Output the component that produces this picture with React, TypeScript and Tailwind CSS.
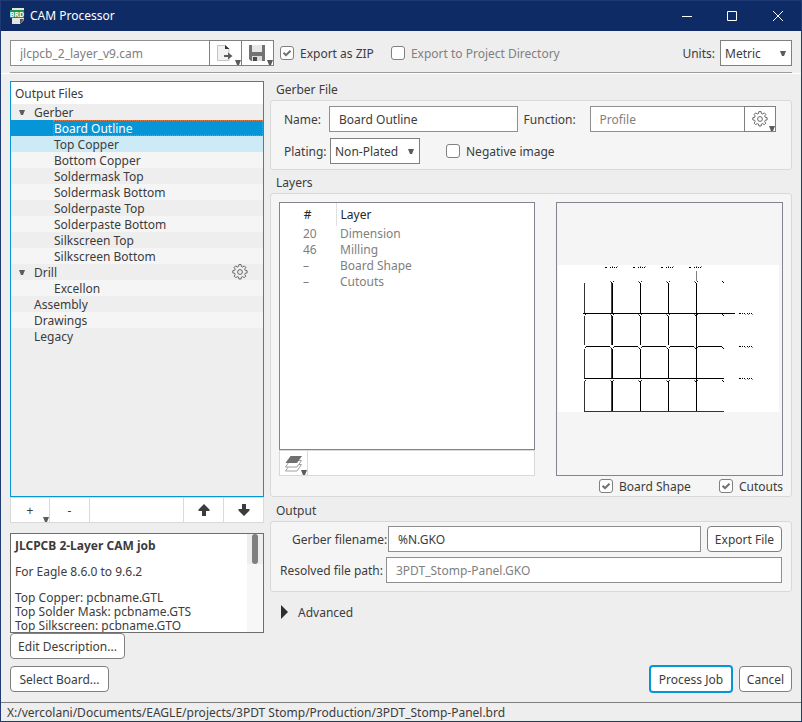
import { type ReactNode } from "react";

type Row = { label: string; level: 0 | 1; open?: boolean; gear?: boolean; state?: "selected" | "hover" };

const rows: Row[] = [
  { label: "Gerber", level: 0, open: true },
  { label: "Board Outline", level: 1, state: "selected" },
  { label: "Top Copper", level: 1, state: "hover" },
  { label: "Bottom Copper", level: 1 },
  { label: "Soldermask Top", level: 1 },
  { label: "Soldermask Bottom", level: 1 },
  { label: "Solderpaste Top", level: 1 },
  { label: "Solderpaste Bottom", level: 1 },
  { label: "Silkscreen Top", level: 1 },
  { label: "Silkscreen Bottom", level: 1 },
  { label: "Drill", level: 0, open: true, gear: true },
  { label: "Excellon", level: 1 },
  { label: "Assembly", level: 0 },
  { label: "Drawings", level: 0 },
  { label: "Legacy", level: 0 },
];

const layers = [
  ["20", "Dimension"],
  ["46", "Milling"],
  ["–", "Board Shape"],
  ["–", "Cutouts"],
];

const field = "h-[26px] min-w-0 border border-[#8f8f8f] bg-white pt-px px-[9px] outline-none";
const pushButton = "h-[26px] shrink-0 rounded-[4px] border border-[#808080] bg-white pt-[2px] text-center whitespace-nowrap";

function Triangle({ className = "" }: { className?: string }) {
  return (
    <svg className={className} width="6" height="5" viewBox="0 0 6 5" aria-hidden="true">
      <path d="M0 0h6L4 5H2z" fill="#5c5c5c" />
    </svg>
  );
}

function Gear({ className = "" }: { className?: string }) {
  return (
    <svg className={className} width="16" height="16" viewBox="0 0 16 16" fill="none" stroke="#666" aria-hidden="true">
      <path d="M6.900.6h2.200l.3 1.900 1.300.5 1.600-1.100 1.500 1.500-1.100 1.600.5 1.300 1.900.4v2.200l-1.900.4-.5 1.300 1.100 1.600-1.500 1.500-1.600-1.100-1.300.5-.3 1.900H6.900l-.4-1.900-1.300-.5-1.600 1.100-1.500-1.500 1.100-1.600-.5-1.300-1.900-.4V6.700l1.900-.4.5-1.300-1.100-1.600 1.500-1.500L5.200 3l1.300-.5z" />
      <circle cx="8" cy="8" r="2.400" />
    </svg>
  );
}

function Check({ children, checked, muted, className = "" }: { children: ReactNode; checked?: boolean; muted?: boolean; className?: string }) {
  return (
    <label className={`flex items-center gap-[6px] whitespace-nowrap ${muted ? "text-[#808080]" : ""} ${className}`}>
      <span className="relative flex size-[14px]">
        <input type="checkbox" defaultChecked={checked} className="peer size-[14px] appearance-none rounded-[3px] border border-[#808080] bg-white" />
        <svg className="pointer-events-none absolute inset-0 hidden peer-checked:block" viewBox="0 0 14 14" aria-hidden="true">
          <path d="M3.500 6.800 6 9.200l4.500-4.500" fill="none" stroke="#707070" strokeWidth="2" />
        </svg>
      </span>
      <span className="pt-[2px]">{children}</span>
    </label>
  );
}

function Select({ id, value, className }: { id: string; value: string; className: string }) {
  return (
    <div className={`relative flex ${className}`}>
      <select id={id} defaultValue={value} className="h-[26px] w-full appearance-none border border-[#808080] bg-white pt-[2px] pl-1 outline-none">
        <option>{value}</option>
      </select>
      <Triangle className="pointer-events-none absolute top-[11px] right-[6px]" />
    </div>
  );
}

function Group({ title, children, className = "", body }: { title: string; children: ReactNode; className?: string; body: string }) {
  return (
    <section className={`flex flex-col ${className}`}>
      <h2 className="mb-px pl-[6px] leading-[18px]">{title}</h2>
      <div className={`rounded-[3px] border border-[#d9d9d9] bg-[#f5f5f5] ${body}`}>{children}</div>
    </section>
  );
}

const columns = [83, 111, 139];
const bands = [
  [80, 110],
  [113, 142],
  [146, 175],
  [178, 208],
];

function BoardPreview() {
  return (
    <svg className="h-full w-full" viewBox="0 0 225 272" shapeRendering="crispEdges" role="img" aria-label="Board preview">
      <rect x="1" y="62" width="221" height="147" fill="#fff" />
      {bands.map(([top, bottom]) => (
        <g key={top}>
          <rect x="27" y={top} width="1" height={bottom - top} fill="#333" />
          <rect x="54" y={top} width="1" height={bottom - top} fill="#444" />
          <rect x="55" y={top} width="1" height={bottom - top} fill="#000" />
          {columns.map((x) => (
            <rect key={x} x={x} y={top} width="1" height={bottom - top} fill="#000" />
          ))}
        </g>
      ))}
      <rect x="139" y="80" width="1" height="128" fill="#000" />
      <rect x="139" y="68" width="1" height="10" fill="#808080" />
      <rect x="26" y="110" width="152" height="1" />
      <rect x="27" y="175" width="140" height="1" />
      <rect x="27" y="208" width="140" height="1" fill="#333" />
      {[29, 57, 85, 113, 141].map((x) => (
        <rect key={x} x={x} y="143" width="24" height="1" />
      ))}
      {[78, 111, 144, 177].map((y) =>
        [55, 83, 111, 139, 167].map((x) => (
          <g key={`${x}-${y}`}>
            <rect x={x - 2} y={y} width="1" height="1" fill={x === 167 ? "#000" : "#777"} />
            <rect x={x - 1} y={y + 1} width="1" height="1" />
            {x !== 167 && <rect x={x + 1} y={y} width="1" height="1" fill="#222" />}
          </g>
        )),
      )}
      <rect x="28" y="111" width="1" height="1" />
      <rect x="28" y="144" width="1" height="1" />
      <rect x="28" y="177" width="1" height="1" />
      {[48, 76, 104, 132].map((x) => (
        <g key={x}>
          <path d={`M${x} 64.5h2m3 0h1m1 0h1m1 0h1m1 0h1`} stroke="#000" />
          <path d={`M${x + 7} 63.5h1m4 0h1`} stroke="#888" />
        </g>
      ))}
      {[110, 143, 175].map((y) => (
        <g key={y}>
          <path d={`M182 ${y + 0.5}h2m1 0h1m1 0h1m2 0h1m1 0h1m1 0h1`} stroke="#000" />
          <path d={`M188 ${y + 1.5}h1m2 0h1m3 0h1`} stroke="#888" />
        </g>
      ))}
    </svg>
  );
}

export default function App() {
  return (
    <div className="flex min-h-screen flex-col border-x border-b border-[#1f3a75] bg-[#eee] font-['Noto_Sans','Open_Sans',sans-serif] text-[12px] leading-[16px] text-[#3c3c3c]">
      <header className="flex h-[31px] items-center border-t border-[#1f3a75] bg-[#0f2b66] pl-[9px] text-white">
        <svg width="16" height="18" viewBox="0 0 16 18" aria-hidden="true">
          <path d="M2 1h12v12l-4 4H2z" fill="#e4e4e4" />
          <path d="M14 12h-4v5z" fill="#555" />
          <rect x="0" y="3" width="14" height="8" fill="#1d9647" />
          <text x="7" y="9.500" textAnchor="middle" fontSize="7" fontWeight="700" fill="#fff">BRD</text>
        </svg>
        <h1 className="ml-[4px] flex-1">CAM Processor</h1>
        <button aria-label="Minimize" className="flex h-full w-[45px] items-center justify-center">
          <svg width="10" height="10" viewBox="0 0 10 10" stroke="currentColor"><path d="M0 5.500h10" /></svg>
        </button>
        <button aria-label="Maximize" className="flex h-full w-[45px] items-center justify-center">
          <svg width="10" height="10" viewBox="0 0 10 10" fill="none" stroke="currentColor"><path d="M.5.5h9v9h-9z" /></svg>
        </button>
        <button aria-label="Close" className="flex h-full w-[47px] items-center justify-center">
          <svg width="10" height="10" viewBox="0 0 10 10" fill="none" stroke="currentColor"><path d="m0 0 10 10M10 0 0 10" /></svg>
        </button>
      </header>

      <div className="mx-[9px] flex h-[42px] items-center border-b border-[#9a9a9a] pt-[2px]">
        <input aria-label="CAM job file" defaultValue="jlcpcb_2_layer_v9.cam" className={`${field} w-[200px] text-[#808080]`} />
        <button aria-label="Load job file" className="relative -ml-px h-[26px] w-[33px] border border-[#808080] bg-white">
          <svg className="ml-[6px]" width="18" height="18" viewBox="0 0 18 18" aria-hidden="true">
            <path d="M1.500 1.500h8l3.500 3.500v11.500h-11.500z" fill="#f2f2f2" stroke="#c4c4c4" />
            <path d="M9 1v4h4.500z" fill="#333" />
            <path d="M8 11h4V8.500l4.500 3.500-4.500 3.500V13H8z" fill="#5c5c5c" />
          </svg>
          <Triangle className="absolute right-0 bottom-0" />
        </button>
        <button aria-label="Save job file" className="relative -ml-px h-[26px] w-[33px] border border-[#808080] bg-white">
          <svg className="ml-[6px]" width="18" height="18" viewBox="0 0 18 18" aria-hidden="true">
            <path d="M1 1h16v16H3l-2-2z" fill="#737373" />
            <path d="M4 1h10v7H4z" fill="#e8e8e8" />
            <path d="M4 12h10v5H4z" fill="#dcdcdc" />
            <path d="M5 13h4v4H5z" fill="#4a4a4a" />
          </svg>
          <Triangle className="absolute right-0 bottom-0" />
        </button>
        <Check checked className="ml-[6px]">Export as ZIP</Check>
        <Check muted className="ml-[17px]">Export to Project Directory</Check>
        <label htmlFor="units" className="ml-auto pt-[2px]">Units:</label>
        <Select id="units" value="Metric" className="ml-[5px] w-[72px]" />
      </div>

      <main className="grid flex-1 grid-cols-[254px_minmax(0,1fr)] gap-x-[6px] border-t border-white px-[9px] pt-[7px]">
        <div className="flex flex-col">
          <div className="flex-1 border border-[#0696d7]">
            <h2 className="h-[22px] bg-white pl-1 leading-[24px]">Output Files</h2>
            <ul>
              {rows.map((row) => (
                <li key={row.label} className="odd:bg-[#eee] even:bg-[#f5f5f5]">
                  <button
                    className={`flex h-[16px] w-full items-center text-left ${
                      row.state === "selected" ? "bg-[#0696d7] text-white" : row.state === "hover" ? "bg-[#cdeaf7]" : ""
                    }`}
                  >
                    {row.level === 0 && <span className="flex w-[23px] pl-[8px]">{row.open && <Triangle />}</span>}
                    <span
                      className={`h-[16px] flex-1 leading-[17px] ${row.level === 1 ? "ml-[42px] pl-px" : ""} ${
                        row.state === "selected" ? "outline-1 -outline-offset-1 outline-[#e07b45] outline-dotted" : ""
                      }`}
                    >
                      {row.label}
                    </span>
                    {row.gear && <Gear className="mr-[15px]" />}
                  </button>
                </li>
              ))}
            </ul>
          </div>
          <div className="flex h-[26px] border border-[#d9d9d9] bg-white">
            <button aria-label="Add" className="relative w-[39px] border-r border-[#d9d9d9] pt-[2px]">
              +
              <Triangle className="absolute right-0 bottom-0" />
            </button>
            <button aria-label="Remove" className="w-[40px] border-r border-[#d9d9d9] pt-[2px]">-</button>
            <span className="flex-1" />
            <button aria-label="Move up" className="flex w-[41px] items-center justify-center border-x border-[#d9d9d9]">
              <svg width="12" height="12" viewBox="0 0 12 12" fill="#3c3c3c"><path d="M6 0l5.500 5.500v1.500H8v5H4V7H.5V5.500z" /></svg>
            </button>
            <button aria-label="Move down" className="flex w-[39px] items-center justify-center">
              <svg width="12" height="12" viewBox="0 0 12 12" fill="#3c3c3c"><path d="M6 12l5.500-5.500V5H8V0H4v5H.5v1.500z" /></svg>
            </button>
          </div>
          <div className="mt-[10px] flex h-[100px] overflow-hidden border border-[#6e6e6e] bg-white leading-[14px]">
            <div className="flex-1 pt-[5px] pl-1">
              <p className="mb-3 font-bold">JLCPCB 2-Layer CAM job</p>
              <p className="mb-3">For Eagle 8.6.0 to 9.6.2</p>
              <p>Top Copper: pcbname.GTL</p>
              <p>Top Solder Mask: pcbname.GTS</p>
              <p>Top Silkscreen: pcbname.GTO</p>
            </div>
            <div className="w-[16px] bg-[#f7f7f7]">
              <div className="h-[30px] bg-[#eee] pl-[5px]">
                <div className="h-[30px] w-[6px] rounded-[3px] bg-[#808080]" />
              </div>
            </div>
          </div>
          <button className={`${pushButton} w-[115px]`}>Edit Description...</button>
        </div>

        <div className="flex flex-col">
          <Group title="Gerber File" body="flex h-[70px] flex-col gap-[6px] pt-[5px] pr-[15px] pl-[13px]">
            <div className="flex items-center">
              <label htmlFor="name" className="w-[45px] pt-[2px]">Name:</label>
              <input id="name" defaultValue="Board Outline" className={`${field} flex-[193]`} />
              <label htmlFor="function" className="w-[72px] pt-[2px] pl-[6px]">Function:</label>
              <input id="function" defaultValue="Profile" className={`${field} flex-[155] text-[#808080]`} />
              <button aria-label="Function options" className="relative -ml-px h-[26px] w-[32px] border border-[#808080] bg-white">
                <Gear className="ml-[7px]" />
                <Triangle className="absolute right-0 bottom-0" />
              </button>
            </div>
            <div className="flex items-center">
              <label htmlFor="plating" className="w-[46px] pt-[2px]">Plating:</label>
              <Select id="plating" value="Non-Plated" className="w-[90px]" />
              <Check className="ml-[26px]">Negative image</Check>
            </div>
          </Group>

          <Group title="Layers" className="mt-[4px] flex-1" body="flex flex-1 gap-[21px] px-2 pt-2">
            <div className="mb-[20px] flex min-w-0 flex-[256] flex-col">
              <div className="flex-1 border border-[#82858f] bg-white">
                <table className="w-full table-fixed border-collapse text-left">
                  <thead>
                    <tr className="h-[23px] text-[#262626]">
                      <th className="w-[56px] border-r border-[#e0e0e0] text-center font-normal">#</th>
                      <th className="pl-1 font-normal">Layer</th>
                    </tr>
                  </thead>
                  <tbody className="text-[#808080]">
                    {layers.map(([number, name]) => (
                      <tr key={name} className="h-[16px]">
                        <td className="pl-[23px]">{number}</td>
                        <td className="pl-1">{name}</td>
                      </tr>
                    ))}
                  </tbody>
                </table>
              </div>
              <div className="flex h-[26px] border border-[#d9d9d9] bg-white">
                <button aria-label="Layer sets" className="relative w-[28px] border-r border-[#d9d9d9]">
                  <svg className="ml-[5px]" width="17" height="17" viewBox="0 0 17 17" aria-hidden="true">
                    <path d="M5 9.500h11.500l-4.500 6.500H.5z" fill="#fff" stroke="#a0a0a0" />
                    <path d="M5 5.500h11.500l-4.500 6.500H.5z" fill="#fff" stroke="#a0a0a0" />
                    <path d="M5.500 1H17l-5 7H.5z" fill="#707070" />
                  </svg>
                  <Triangle className="absolute right-0 bottom-0" />
                </button>
              </div>
            </div>
            <div className="flex min-w-0 flex-[227] flex-col">
              <div className="min-h-0 flex-1 border border-[#82858f] contain-size">
                <BoardPreview />
              </div>
              <div className="flex h-[20px] items-center justify-end gap-[28px]">
                <Check checked>Board Shape</Check>
                <Check checked>Cutouts</Check>
              </div>
            </div>
          </Group>

          <Group title="Output" className="mt-[5px]" body="flex h-[71px] flex-col gap-[5px] pt-[4px] pr-[9px] pl-[9px]">
            <div className="flex items-center">
              <label htmlFor="filename" className="w-[108px] pt-[2px] pl-[12px] whitespace-nowrap">Gerber filename:</label>
              <input id="filename" defaultValue="%N.GKO" className={`${field} flex-1`} />
              <button className={`${pushButton} ml-[6px] w-[75px]`}>Export File</button>
            </div>
            <div className="flex items-center">
              <label htmlFor="resolved" className="w-[106px] pt-[2px] whitespace-nowrap">Resolved file path:</label>
              <input id="resolved" defaultValue="3PDT_Stomp-Panel.GKO" className={`${field} flex-1 text-[#808080]`} />
            </div>
          </Group>

          <button className="mt-[11px] mb-[38px] flex items-center gap-[10px] pl-[11px] text-left">
            <svg width="7" height="14" viewBox="0 0 7 14" aria-hidden="true"><path d="M0 0l7 7-7 7z" fill="#2e2e2e" /></svg>
            <span className="pt-[2px]">Advanced</span>
          </button>
        </div>
      </main>

      <div className="flex items-center px-[9px] pt-[6px] pb-[9px]">
        <button className={`${pushButton} mr-auto w-[99px]`}>Select Board...</button>
        <button className="h-[28px] w-[84px] rounded-[4px] border-2 border-[#0696d7] bg-white pt-[2px]">Process Job</button>
        <button className={`${pushButton} ml-[6px] w-[53px]`}>Cancel</button>
      </div>

      <footer className="h-[19px] border-t border-[#808080] pl-[6px] leading-[20px]">
        X:/vercolani/Documents/EAGLE/projects/3PDT Stomp/Production/3PDT_Stomp-Panel.brd
      </footer>
    </div>
  );
}
